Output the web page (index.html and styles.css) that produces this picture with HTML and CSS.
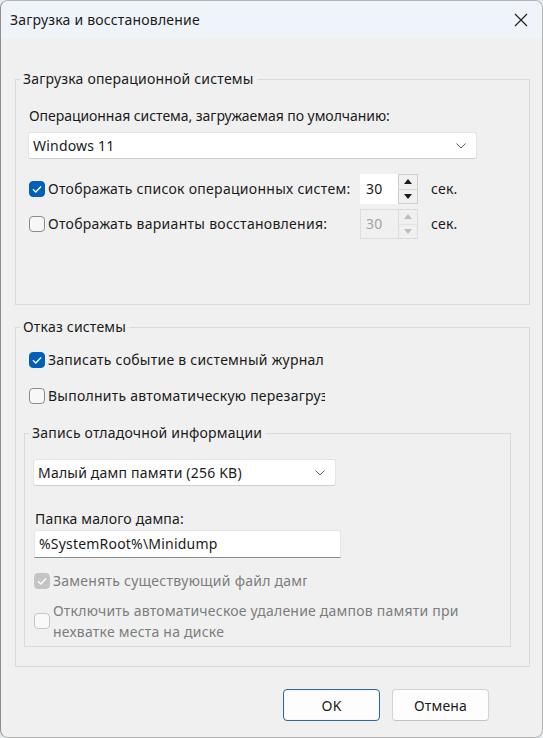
FILE: index.html
```html
<!DOCTYPE html>
<html lang="ru">
<head>
<meta charset="utf-8">
<title>Загрузка и восстановление</title>
<link rel="stylesheet" href="styles.css">
</head>
<body>
<div class="window">
  <div class="titlebar">
    <span class="title">Загрузка и восстановление</span>
    <svg class="close" viewBox="0 0 14 14" width="14" height="14"><path d="M1 1L13 13M13 1L1 13" stroke="#1b1b1b" stroke-width="1.1" fill="none"/></svg>
  </div>
  <div class="content">
    <fieldset class="group g1">
      <legend>Загрузка операционной системы</legend>
      <div class="gbody g1body">
        <div class="label label1">Операционная система, загружаемая по умолчанию:</div>
        <div class="combo combo1">
          <span>Windows 11</span>
          <svg class="chev" viewBox="0 0 10 6" width="10" height="6"><path d="M0.5 0.5L5 5L9.5 0.5" stroke="#616161" stroke-width="1" fill="none"/></svg>
        </div>
        <div class="row spinrow r1">
          <span class="cb checked"><svg viewBox="0 0 16 16" width="16" height="16"><path d="M4 8.3L6.8 11L12 5.5" stroke="#fff" stroke-width="1.4" fill="none"/></svg></span>
          <span class="cblabel wspin">Отображать список операционных систем:</span>
          <div class="spin">
            <span class="spinval">30</span>
            <div class="spinbtns">
              <span class="sbtn"><svg viewBox="0 0 8 5" width="8" height="5"><path d="M0 5L4 0L8 5Z" fill="#1b1b1b"/></svg></span>
              <span class="sbtn"><svg viewBox="0 0 8 5" width="8" height="5"><path d="M0 0L4 5L8 0Z" fill="#1b1b1b"/></svg></span>
            </div>
          </div>
          <span class="unit">сек.</span>
        </div>
        <div class="row spinrow r2">
          <span class="cb"></span>
          <span class="cblabel wspin">Отображать варианты восстановления:</span>
          <div class="spin disabled">
            <span class="spinval">30</span>
            <div class="spinbtns">
              <span class="sbtn"><svg viewBox="0 0 8 5" width="8" height="5"><path d="M0 5L4 0L8 5Z" fill="#bdbdbd"/></svg></span>
              <span class="sbtn"><svg viewBox="0 0 8 5" width="8" height="5"><path d="M0 0L4 5L8 0Z" fill="#bdbdbd"/></svg></span>
            </div>
          </div>
          <span class="unit">сек.</span>
        </div>
      </div>
    </fieldset>

    <fieldset class="group g2">
      <legend>Отказ системы</legend>
      <div class="gbody g2body">
        <div class="row chkrow c1">
          <span class="cb checked"><svg viewBox="0 0 16 16" width="16" height="16"><path d="M4 8.3L6.8 11L12 5.5" stroke="#fff" stroke-width="1.4" fill="none"/></svg></span>
          <span class="cblabel clip1">Записать событие в системный журнал</span>
        </div>
        <div class="row chkrow c2">
          <span class="cb"></span>
          <span class="cblabel clip1">Выполнить автоматическую перезагрузку</span>
        </div>

        <fieldset class="group g3">
          <legend>Запись отладочной информации</legend>
          <div class="gbody g3body">
            <div class="combo combo2">
              <span>Малый дамп памяти (256 KB)</span>
              <svg class="chev" viewBox="0 0 10 6" width="10" height="6"><path d="M0.5 0.5L5 5L9.5 0.5" stroke="#616161" stroke-width="1" fill="none"/></svg>
            </div>
            <div class="label label2">Папка малого дампа:</div>
            <div class="textbox">%SystemRoot%\Minidump</div>
            <div class="row chkrow c3 dis">
              <span class="cb checked disabled"><svg viewBox="0 0 16 16" width="16" height="16"><path d="M4 8.3L6.8 11L12 5.5" stroke="#fff" stroke-width="1.4" fill="none"/></svg></span>
              <span class="cblabel clip2">Заменять существующий файл дампа</span>
            </div>
            <div class="row chkrow c4 dis">
              <span class="cb disabled"></span>
              <span class="cblabel multi">Отключить автоматическое удаление дампов памяти при<br>нехватке места на диске</span>
            </div>
          </div>
        </fieldset>
      </div>
    </fieldset>

    <div class="buttons">
      <button class="btn primary">OK</button>
      <button class="btn">Отмена</button>
    </div>
  </div>
</div>
</body>
</html>
```

FILE: styles.css
```css
* { box-sizing: border-box; }
html, body { margin: 0; padding: 0; }
body {
  width: 543px;
  height: 738px;
  overflow: hidden;
  background: #e8ebee;
  font-family: "Noto Sans", "Open Sans", sans-serif;
  font-size: 14px;
  letter-spacing: 0.2px;
  color: #1b1b1b;
}
.window {
  width: 543px;
  height: 738px;
  background: #f0f0f0;
  border: 1px solid #b4b4b4;
  border-left-color: #8e8e8e;
  border-radius: 8px;
  overflow: hidden;
  display: flex;
  flex-direction: column;
}
.titlebar {
  flex: none;
  height: 37px;
  background: #eef4f9;
  display: flex;
  align-items: center;
  justify-content: space-between;
  padding: 0 14px 0 9px;
}
.title { line-height: 20px; }
.close { display: block; }

.content {
  flex: 1;
  display: flex;
  flex-direction: column;
  padding: 0 12px 0 14px;
}

fieldset.group {
  margin: 0;
  padding: 0;
  min-width: 0;
  border: 1px solid #dadada;
}
fieldset.group legend {
  margin-left: 4px;
  padding: 0 3px;
  line-height: 20px;
}
fieldset.g1 { margin-top: 31px; }
.g1body { padding: 17px 0 65px 12px; }
.label { line-height: 20px; margin-left: 1px; }
.label1 { letter-spacing: -0.05px; }
.combo {
  display: flex;
  align-items: center;
  justify-content: space-between;
  height: 27px;
  background: #fff;
  border: 1px solid #e3e3e3;
  border-bottom-color: #cfcfcf;
  border-radius: 3px;
  padding: 0 10px 0 4px;
}
.combo1 { width: 449px; margin-top: 6px; }
.combo2 { width: 303px; }

.row { display: flex; align-items: center; }
.spinrow { height: 30px; margin-left: 1px; }
.r1 { margin-top: 15px; }
.r2 { margin-top: 5px; }

.cb {
  flex: none;
  width: 16px;
  height: 16px;
  border: 1px solid #8a8a8a;
  border-radius: 4px;
  background: #f7f7f7;
  margin-right: 3px;
  display: flex;
}
.cb.checked { background: #005fb8; border-color: #005fb8; }
.cb.checked svg { margin: -1px; }
.cb.disabled { border-color: #c6c6c6; background: #f9f9f9; }
.cb.checked.disabled { background: #c4c4c4; border-color: #c4c4c4; }

.cblabel { line-height: 20px; white-space: nowrap; }
.wspin { width: 312px; letter-spacing: 0.28px; }

.spin { display: flex; height: 30px; }
.spinval {
  width: 38px;
  height: 30px;
  background: #fff;
  padding-left: 6px;
  line-height: 29px;
}
.spinbtns {
  width: 20px;
  height: 30px;
  border: 1px solid #cfcfcf;
  display: flex;
  flex-direction: column;
}
.sbtn {
  flex: 1;
  display: flex;
  align-items: center;
  justify-content: center;
}
.sbtn + .sbtn { border-top: 1px solid #d6d6d6; }
.spin.disabled .spinval {
  background: #f0f0f0;
  border: 1px solid #dcdcdc;
  border-right: none;
  color: #a3a3a3;
  padding-left: 5px;
  line-height: 27px;
}
.spin.disabled .spinbtns { border-color: #dcdcdc; }
.spin.disabled .sbtn + .sbtn { border-top-color: #e2e2e2; }
.unit { margin-left: 13px; line-height: 20px; }

fieldset.g2 { margin-top: 12px; }
.g2body { padding: 13px 18px 19px 8px; }
.chkrow { min-height: 20px; margin-left: 5px; }
.clip1 { width: 277px; overflow: hidden; letter-spacing: 0.25px; }
.c2 { margin-top: 16px; }

fieldset.g3 { margin-top: 17px; }
.g3body { padding: 16px 0 4px 8px; }
.label2 { margin-top: 23px; margin-left: 2px; }
.textbox {
  width: 307px;
  height: 28px;
  margin-top: 1px;
  margin-left: 1px;
  background: #fff;
  border: 1px solid #e6e6e6;
  border-bottom: 1px solid #8a8a8a;
  border-radius: 3px 3px 0 0;
  padding-left: 4px;
  line-height: 26px;
}
.dis { color: #7d7d7d; margin-left: 1px; }
.c3 { margin-top: 13px; }
.clip2 { width: 254px; overflow: hidden; letter-spacing: 0.25px; }
.c4 { margin-top: 9px; }
.multi { line-height: 21px; white-space: normal; letter-spacing: 0.22px; }

.buttons {
  display: flex;
  justify-content: flex-end;
  gap: 12px;
  margin-top: 22px;
  padding-right: 41px;
}
.btn {
  width: 97px;
  height: 32px;
  font-family: inherit;
  font-size: 14px;
  letter-spacing: inherit;
  color: #1b1b1b;
  background: #fdfdfd;
  border: 1px solid #d3d3d3;
  border-bottom-color: #c2c2c2;
  border-radius: 4px;
  padding: 0;
}
.btn.primary {
  border: 1px solid #2b6a9c;
  box-shadow: inset 0 0 0 1px #f3f7fb;
}
```
